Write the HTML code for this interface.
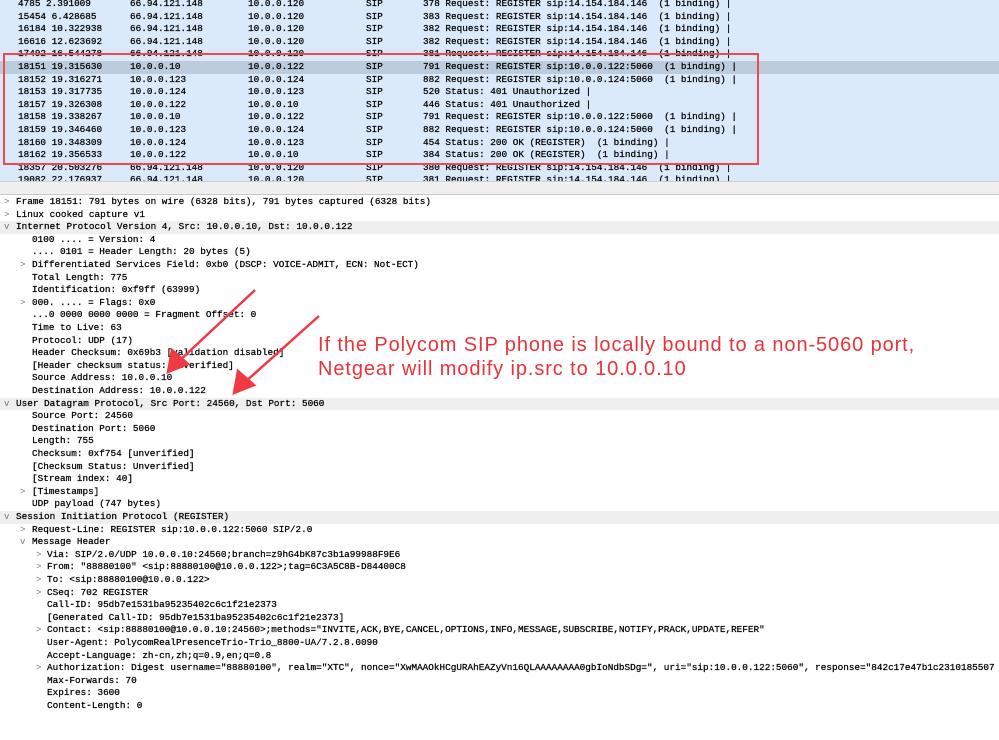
<!DOCTYPE html>
<html><head><meta charset="utf-8"><style>
body{margin:0;width:999px;height:740px;overflow:hidden;background:#fff;font-family:"Liberation Mono",monospace;font-size:9.35px;color:#000;-webkit-text-stroke:0.25px #000;position:relative}
.top{position:absolute;left:0;top:0;width:999px;height:181px;background:#dbeafb;overflow:hidden}
.r{position:absolute;left:0;width:999px;height:12.6px;line-height:12.6px;white-space:pre}
.r span{position:absolute}
.sel{background:#bdccdc}
.sep{position:absolute;left:0;top:181px;width:999px;height:12px;background:#f0f0f0;border-top:1px solid #d0d0d0;border-bottom:1px solid #c8c8c8}
.d{position:absolute;left:0;width:999px;height:12.6px;line-height:12.6px;white-space:pre}
.h{background:#efefef}
.a{position:absolute;color:#777;font-size:9px;-webkit-text-stroke:0}
.note{position:absolute;left:318px;font-family:"Liberation Sans",sans-serif;font-size:20px;letter-spacing:0.9px;color:#e8333b;white-space:nowrap;-webkit-text-stroke:0}
</style></head><body>
<div class="top">
<div class="r" style="top:-2px"><span style="left:18px">4785 2.391009</span><span style="left:130px">66.94.121.148</span><span style="left:248px">10.0.0.120</span><span style="left:366px">SIP</span><span style="left:423px">378 Request: REGISTER sip:14.154.184.146  (1 binding) |</span></div>
<div class="r" style="top:10.6px"><span style="left:18px">15454 6.428685</span><span style="left:130px">66.94.121.148</span><span style="left:248px">10.0.0.120</span><span style="left:366px">SIP</span><span style="left:423px">383 Request: REGISTER sip:14.154.184.146  (1 binding) |</span></div>
<div class="r" style="top:23.2px"><span style="left:18px">16184 10.322938</span><span style="left:130px">66.94.121.148</span><span style="left:248px">10.0.0.120</span><span style="left:366px">SIP</span><span style="left:423px">382 Request: REGISTER sip:14.154.184.146  (1 binding) |</span></div>
<div class="r" style="top:35.8px"><span style="left:18px">16616 12.623692</span><span style="left:130px">66.94.121.148</span><span style="left:248px">10.0.0.120</span><span style="left:366px">SIP</span><span style="left:423px">382 Request: REGISTER sip:14.154.184.146  (1 binding) |</span></div>
<div class="r" style="top:48.4px"><span style="left:18px">17492 16.544278</span><span style="left:130px">66.94.121.148</span><span style="left:248px">10.0.0.120</span><span style="left:366px">SIP</span><span style="left:423px">381 Request: REGISTER sip:14.154.184.146  (1 binding) |</span></div>
<div class="r sel" style="top:61px"><span style="left:18px">18151 19.315630</span><span style="left:130px">10.0.0.10</span><span style="left:248px">10.0.0.122</span><span style="left:366px">SIP</span><span style="left:423px">791 Request: REGISTER sip:10.0.0.122:5060  (1 binding) |</span></div>
<div class="r" style="top:73.6px"><span style="left:18px">18152 19.316271</span><span style="left:130px">10.0.0.123</span><span style="left:248px">10.0.0.124</span><span style="left:366px">SIP</span><span style="left:423px">882 Request: REGISTER sip:10.0.0.124:5060  (1 binding) |</span></div>
<div class="r" style="top:86.2px"><span style="left:18px">18153 19.317735</span><span style="left:130px">10.0.0.124</span><span style="left:248px">10.0.0.123</span><span style="left:366px">SIP</span><span style="left:423px">520 Status: 401 Unauthorized |</span></div>
<div class="r" style="top:98.8px"><span style="left:18px">18157 19.326308</span><span style="left:130px">10.0.0.122</span><span style="left:248px">10.0.0.10</span><span style="left:366px">SIP</span><span style="left:423px">446 Status: 401 Unauthorized |</span></div>
<div class="r" style="top:111.4px"><span style="left:18px">18158 19.338267</span><span style="left:130px">10.0.0.10</span><span style="left:248px">10.0.0.122</span><span style="left:366px">SIP</span><span style="left:423px">791 Request: REGISTER sip:10.0.0.122:5060  (1 binding) |</span></div>
<div class="r" style="top:124px"><span style="left:18px">18159 19.346460</span><span style="left:130px">10.0.0.123</span><span style="left:248px">10.0.0.124</span><span style="left:366px">SIP</span><span style="left:423px">882 Request: REGISTER sip:10.0.0.124:5060  (1 binding) |</span></div>
<div class="r" style="top:136.6px"><span style="left:18px">18160 19.348309</span><span style="left:130px">10.0.0.124</span><span style="left:248px">10.0.0.123</span><span style="left:366px">SIP</span><span style="left:423px">454 Status: 200 OK (REGISTER)  (1 binding) |</span></div>
<div class="r" style="top:149.2px"><span style="left:18px">18162 19.356533</span><span style="left:130px">10.0.0.122</span><span style="left:248px">10.0.0.10</span><span style="left:366px">SIP</span><span style="left:423px">384 Status: 200 OK (REGISTER)  (1 binding) |</span></div>
<div class="r" style="top:161.8px"><span style="left:18px">18357 20.503276</span><span style="left:130px">66.94.121.148</span><span style="left:248px">10.0.0.120</span><span style="left:366px">SIP</span><span style="left:423px">380 Request: REGISTER sip:14.154.184.146  (1 binding) |</span></div>
<div class="r" style="top:174.4px"><span style="left:18px">19082 22.176937</span><span style="left:130px">66.94.121.148</span><span style="left:248px">10.0.0.120</span><span style="left:366px">SIP</span><span style="left:423px">381 Request: REGISTER sip:14.154.184.146  (1 binding) |</span></div>
</div>
<div style="position:absolute;left:3px;top:53px;width:752px;height:108px;border:2px solid #ef4a52"></div>
<div class="sep"></div>

<div class="d" style="top:196px"><span class="a" style="left:4px">&gt;</span><span style="position:absolute;left:16px">Frame 18151: 791 bytes on wire (6328 bits), 791 bytes captured (6328 bits)</span></div>
<div class="d" style="top:208.6px"><span class="a" style="left:4px">&gt;</span><span style="position:absolute;left:16px">Linux cooked capture v1</span></div>
<div class="d h" style="top:221.2px"><span class="a" style="left:4px">v</span><span style="position:absolute;left:16px">Internet Protocol Version 4, Src: 10.0.0.10, Dst: 10.0.0.122</span></div>
<div class="d" style="top:233.8px"><span style="position:absolute;left:32px">0100 .... = Version: 4</span></div>
<div class="d" style="top:246.4px"><span style="position:absolute;left:32px">.... 0101 = Header Length: 20 bytes (5)</span></div>
<div class="d" style="top:259px"><span class="a" style="left:20px">&gt;</span><span style="position:absolute;left:32px">Differentiated Services Field: 0xb0 (DSCP: VOICE-ADMIT, ECN: Not-ECT)</span></div>
<div class="d" style="top:271.6px"><span style="position:absolute;left:32px">Total Length: 775</span></div>
<div class="d" style="top:284.2px"><span style="position:absolute;left:32px">Identification: 0xf9ff (63999)</span></div>
<div class="d" style="top:296.8px"><span class="a" style="left:20px">&gt;</span><span style="position:absolute;left:32px">000. .... = Flags: 0x0</span></div>
<div class="d" style="top:309.4px"><span style="position:absolute;left:32px">...0 0000 0000 0000 = Fragment Offset: 0</span></div>
<div class="d" style="top:322px"><span style="position:absolute;left:32px">Time to Live: 63</span></div>
<div class="d" style="top:334.6px"><span style="position:absolute;left:32px">Protocol: UDP (17)</span></div>
<div class="d" style="top:347.2px"><span style="position:absolute;left:32px">Header Checksum: 0x69b3 [validation disabled]</span></div>
<div class="d" style="top:359.8px"><span style="position:absolute;left:32px">[Header checksum status: Unverified]</span></div>
<div class="d" style="top:372.4px"><span style="position:absolute;left:32px">Source Address: 10.0.0.10</span></div>
<div class="d" style="top:385px"><span style="position:absolute;left:32px">Destination Address: 10.0.0.122</span></div>
<div class="d h" style="top:397.6px"><span class="a" style="left:4px">v</span><span style="position:absolute;left:16px">User Datagram Protocol, Src Port: 24560, Dst Port: 5060</span></div>
<div class="d" style="top:410.2px"><span style="position:absolute;left:32px">Source Port: 24560</span></div>
<div class="d" style="top:422.8px"><span style="position:absolute;left:32px">Destination Port: 5060</span></div>
<div class="d" style="top:435.4px"><span style="position:absolute;left:32px">Length: 755</span></div>
<div class="d" style="top:448px"><span style="position:absolute;left:32px">Checksum: 0xf754 [unverified]</span></div>
<div class="d" style="top:460.6px"><span style="position:absolute;left:32px">[Checksum Status: Unverified]</span></div>
<div class="d" style="top:473.2px"><span style="position:absolute;left:32px">[Stream index: 40]</span></div>
<div class="d" style="top:485.8px"><span class="a" style="left:20px">&gt;</span><span style="position:absolute;left:32px">[Timestamps]</span></div>
<div class="d" style="top:498.4px"><span style="position:absolute;left:32px">UDP payload (747 bytes)</span></div>
<div class="d h" style="top:511px"><span class="a" style="left:4px">v</span><span style="position:absolute;left:16px">Session Initiation Protocol (REGISTER)</span></div>
<div class="d" style="top:523.6px"><span class="a" style="left:20px">&gt;</span><span style="position:absolute;left:32px">Request-Line: REGISTER sip:10.0.0.122:5060 SIP/2.0</span></div>
<div class="d" style="top:536.2px"><span class="a" style="left:20px">v</span><span style="position:absolute;left:32px">Message Header</span></div>
<div class="d" style="top:548.8px"><span class="a" style="left:36px">&gt;</span><span style="position:absolute;left:47px">Via: SIP/2.0/UDP 10.0.0.10:24560;branch=z9hG4bK87c3b1a99988F9E6</span></div>
<div class="d" style="top:561.4px"><span class="a" style="left:36px">&gt;</span><span style="position:absolute;left:47px">From: "88880100" &lt;sip:88880100@10.0.0.122&gt;;tag=6C3A5C8B-D84400C8</span></div>
<div class="d" style="top:574px"><span class="a" style="left:36px">&gt;</span><span style="position:absolute;left:47px">To: &lt;sip:88880100@10.0.0.122&gt;</span></div>
<div class="d" style="top:586.6px"><span class="a" style="left:36px">&gt;</span><span style="position:absolute;left:47px">CSeq: 702 REGISTER</span></div>
<div class="d" style="top:599.2px"><span style="position:absolute;left:47px">Call-ID: 95db7e1531ba95235402c6c1f21e2373</span></div>
<div class="d" style="top:611.8px"><span style="position:absolute;left:47px">[Generated Call-ID: 95db7e1531ba95235402c6c1f21e2373]</span></div>
<div class="d" style="top:624.4px"><span class="a" style="left:36px">&gt;</span><span style="position:absolute;left:47px">Contact: &lt;sip:88880100@10.0.0.10:24560&gt;;methods="INVITE,ACK,BYE,CANCEL,OPTIONS,INFO,MESSAGE,SUBSCRIBE,NOTIFY,PRACK,UPDATE,REFER"</span></div>
<div class="d" style="top:637px"><span style="position:absolute;left:47px">User-Agent: PolycomRealPresenceTrio-Trio_8800-UA/7.2.8.0090</span></div>
<div class="d" style="top:649.6px"><span style="position:absolute;left:47px">Accept-Language: zh-cn,zh;q=0.9,en;q=0.8</span></div>
<div class="d" style="top:662.2px"><span class="a" style="left:36px">&gt;</span><span style="position:absolute;left:47px">Authorization: Digest username="88880100", realm="XTC", nonce="XwMAAOkHCgURAhEAZyVn16QLAAAAAAAA0gbIoNdbSDg=", uri="sip:10.0.0.122:5060", response="842c17e47b1c2310185507</span></div>
<div class="d" style="top:674.8px"><span style="position:absolute;left:47px">Max-Forwards: 70</span></div>
<div class="d" style="top:687.4px"><span style="position:absolute;left:47px">Expires: 3600</span></div>
<div class="d" style="top:700px"><span style="position:absolute;left:47px">Content-Length: 0</span></div>

<svg style="position:absolute;left:0;top:0" width="999" height="740">
<g stroke="#ef3a44" stroke-width="2.5" fill="#ef3a44">
<line x1="255" y1="290" x2="178" y2="362"/>
<polygon points="168,372 172,350 188,364"/>
<line x1="319" y1="316" x2="244" y2="383"/>
<polygon points="234,393 238,371 254,385"/>
</g></svg>
<div class="note" style="top:334px">If the Polycom SIP phone is locally bound to a non-5060 port,</div>
<div class="note" style="top:358px">Netgear will modify ip.src to 10.0.0.10</div>
</body></html>
